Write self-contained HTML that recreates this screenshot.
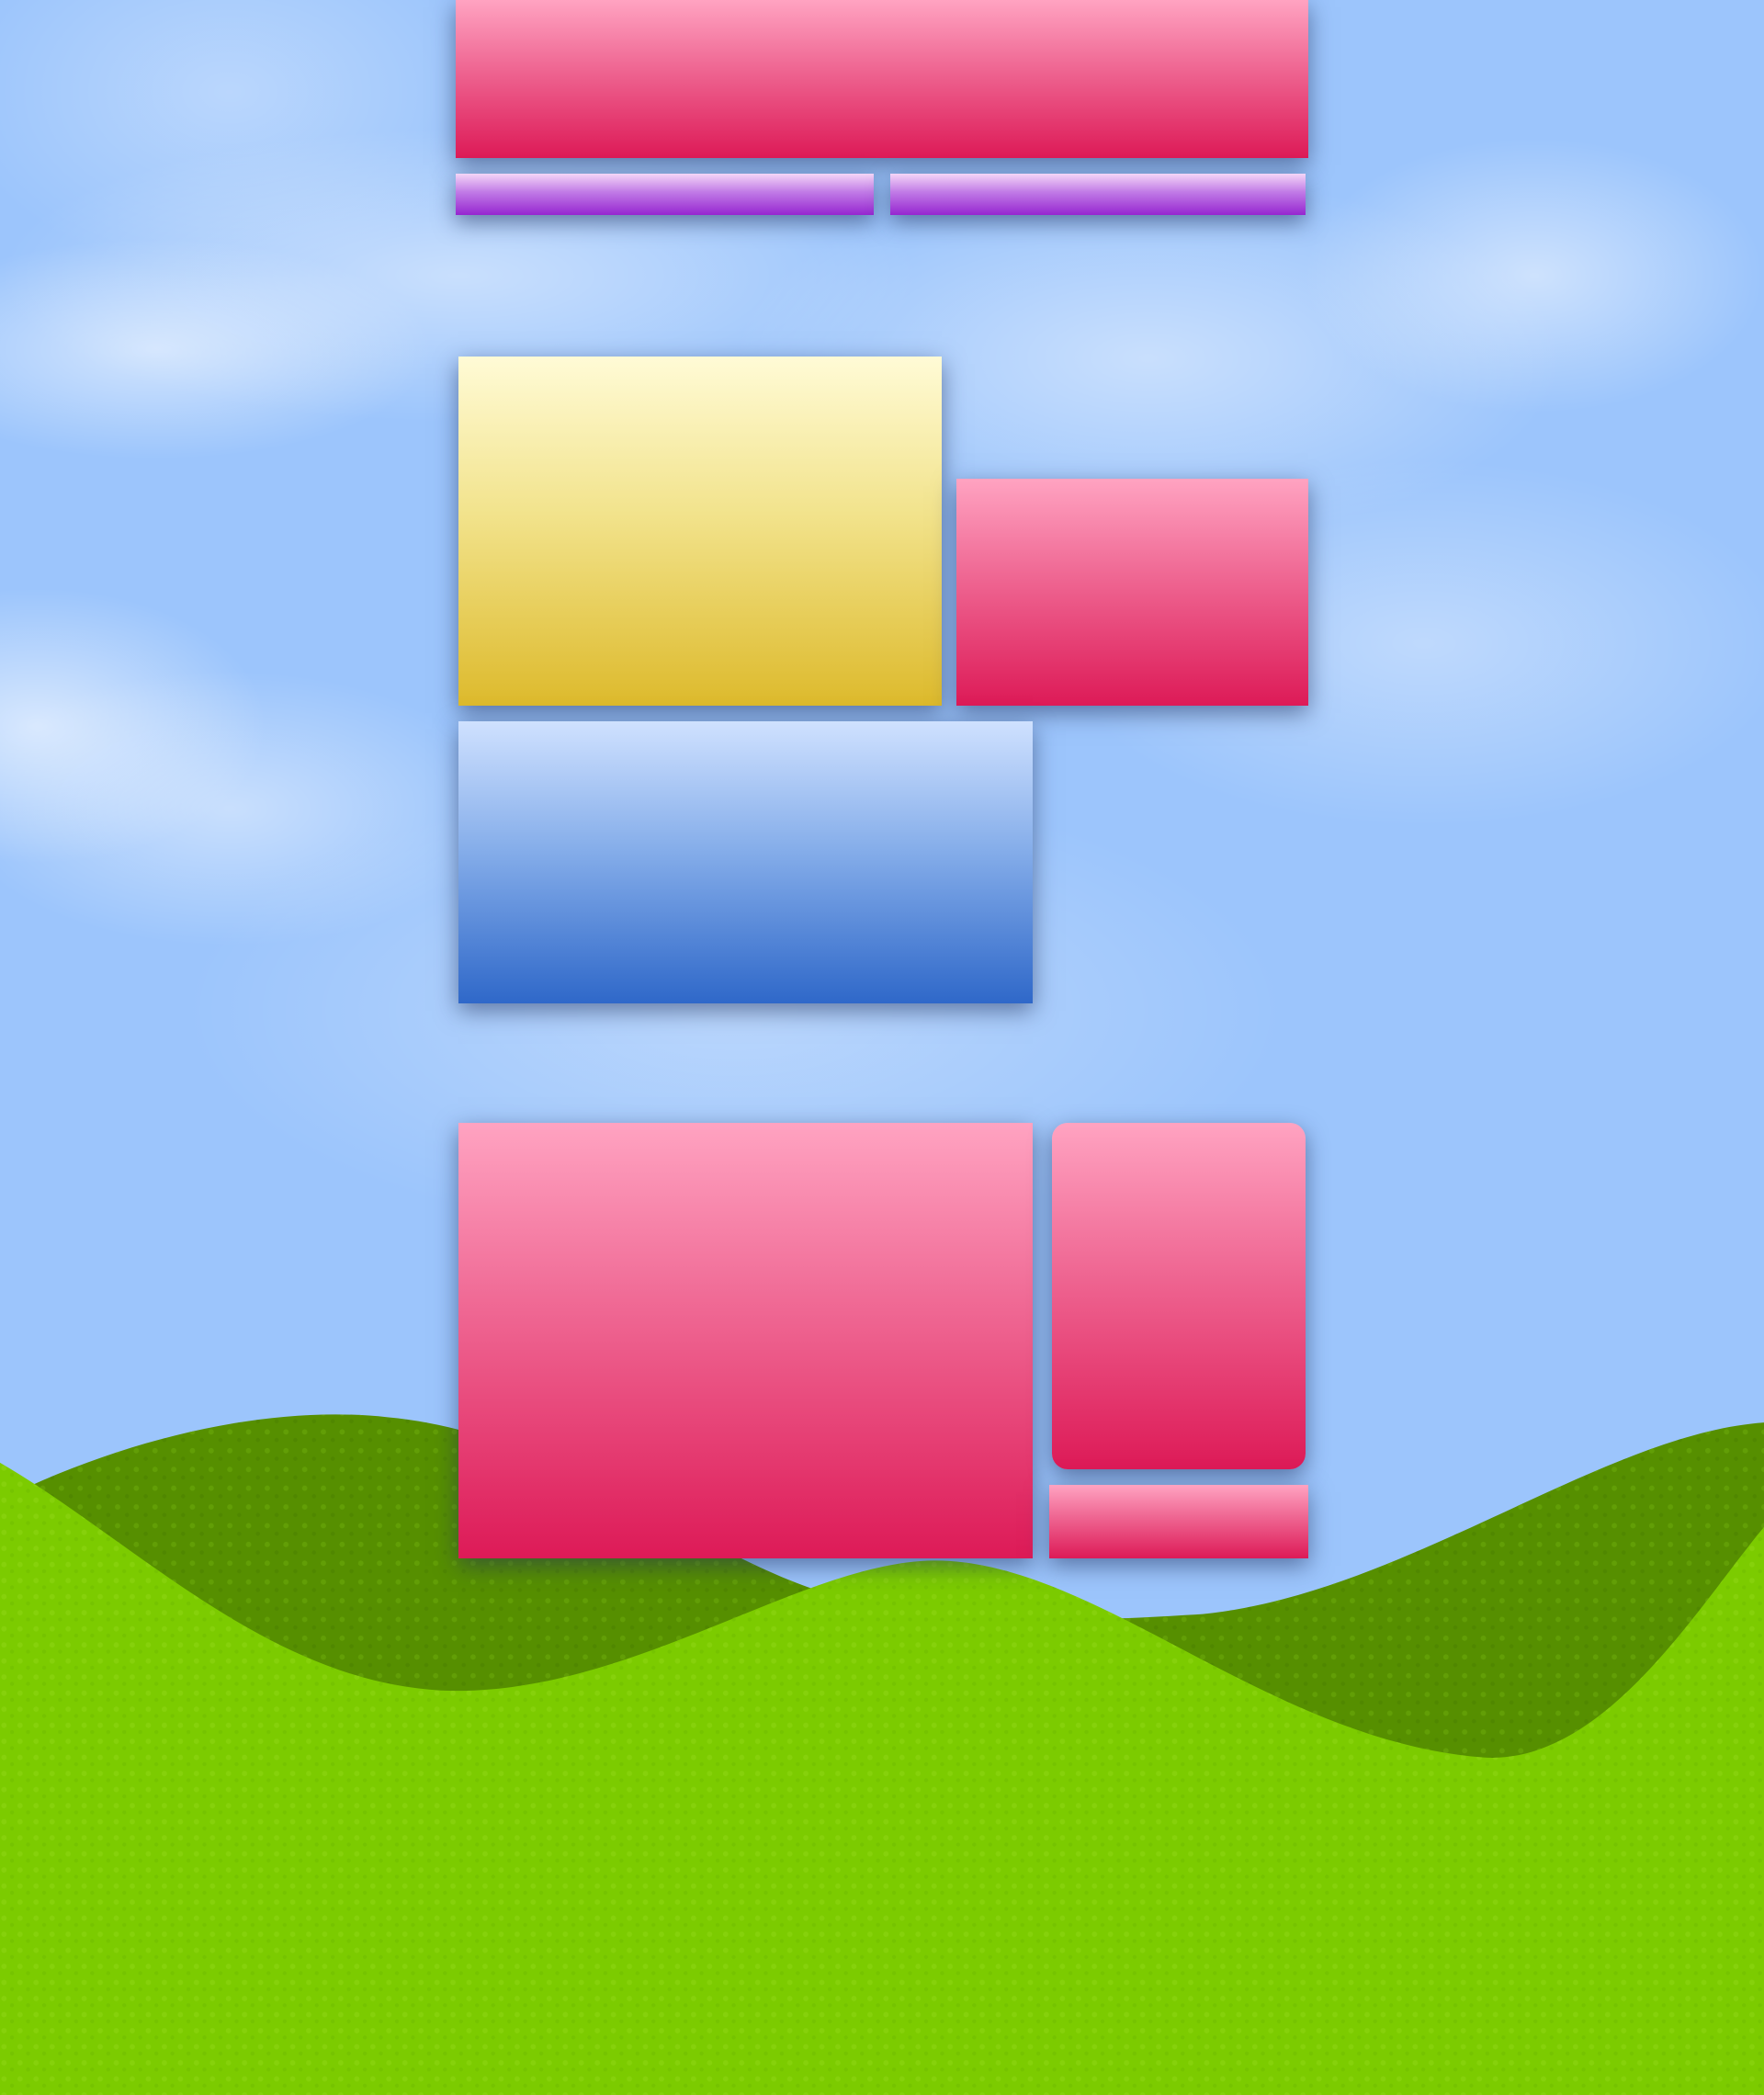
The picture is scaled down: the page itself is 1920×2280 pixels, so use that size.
<!DOCTYPE html>
<html><head><meta charset="utf-8"><style>
html,body{margin:0;padding:0}
body{width:1920px;height:2280px;position:relative;overflow:hidden;background:#9cc5fc;font-family:"Liberation Sans",sans-serif}
.sky{position:absolute;inset:0;background:
radial-gradient(ellipse 300px 120px at 170px 380px,rgba(255,255,255,.55),rgba(255,255,255,0)),
radial-gradient(ellipse 500px 160px at 500px 300px,rgba(255,255,255,.45),rgba(255,255,255,0)),
radial-gradient(ellipse 450px 200px at 1250px 390px,rgba(255,255,255,.45),rgba(255,255,255,0)),
radial-gradient(ellipse 250px 150px at 1670px 300px,rgba(255,255,255,.5),rgba(255,255,255,0)),
radial-gradient(ellipse 250px 150px at 40px 790px,rgba(255,255,255,.6),rgba(255,255,255,0)),
radial-gradient(ellipse 300px 150px at 250px 880px,rgba(255,255,255,.45),rgba(255,255,255,0)),
radial-gradient(ellipse 400px 200px at 1550px 700px,rgba(255,255,255,.35),rgba(255,255,255,0)),
radial-gradient(ellipse 600px 250px at 800px 1100px,rgba(255,255,255,.3),rgba(255,255,255,0)),
radial-gradient(ellipse 300px 200px at 250px 100px,rgba(255,255,255,.3),rgba(255,255,255,0));}
.b{position:absolute;box-shadow:0 8px 24px rgba(30,45,90,.55)}
.pink{background:linear-gradient(#ffa3c1,#f06b96 40%,#dd1a57)}
.pur{background:linear-gradient(#f4d6f7,#c07ae6 45%,#9626d0)}
.yel{background:linear-gradient(#fffbd6,#f2e38c 45%,#ddba2c)}
.blu{background:linear-gradient(#cfe1ff,#86aeea 45%,#2f68c9)}
svg{position:absolute;left:0;top:0}
</style></head><body>
<div class="sky"></div>
<svg width="1920" height="2280" viewBox="0 0 1320 1564" preserveAspectRatio="none">
<defs>
<pattern id="g1" width="14" height="14" patternUnits="userSpaceOnUse"><circle cx="4" cy="5" r="2" fill="#6aa80a" opacity=".6"/><circle cx="11" cy="11" r="1.6" fill="#4a8000" opacity=".5"/></pattern>
<pattern id="g2" width="12" height="12" patternUnits="userSpaceOnUse"><circle cx="3" cy="4" r="2" fill="#8ad410" opacity=".7"/><circle cx="9" cy="9" r="1.5" fill="#72c000" opacity=".7"/></pattern>
</defs>
<path d="M0,1120 C90,1075 200,1048 290,1058 C420,1070 520,1160 620,1190 C720,1215 820,1210 900,1205 C1050,1190 1200,1070 1320,1062 L1320,1564 L0,1564 Z" fill="#568f00"/>
<path d="M0,1120 C90,1075 200,1048 290,1058 C420,1070 520,1160 620,1190 C720,1215 820,1210 900,1205 C1050,1190 1200,1070 1320,1062 L1320,1564 L0,1564 Z" fill="url(#g1)"/>
<path d="M0,1092 C100,1150 200,1255 330,1262 C470,1268 600,1165 700,1165 C820,1165 950,1300 1110,1312 C1200,1318 1270,1200 1320,1140 L1320,1564 L0,1564 Z" fill="#7ccb00"/>
<path d="M0,1092 C100,1150 200,1255 330,1262 C470,1268 600,1165 700,1165 C820,1165 950,1300 1110,1312 C1200,1318 1270,1200 1320,1140 L1320,1564 L0,1564 Z" fill="url(#g2)"/>
</svg>
<div class="b pink" style="left:496px;top:0;width:928px;height:172px"></div>
<div class="b pur" style="left:496px;top:189px;width:455px;height:45px"></div>
<div class="b pur" style="left:969px;top:189px;width:452px;height:45px"></div>
<div class="b yel" style="left:499px;top:388px;width:526px;height:380px"></div>
<div class="b pink" style="left:1041px;top:521px;width:383px;height:247px"></div>
<div class="b blu" style="left:499px;top:785px;width:625px;height:307px"></div>
<div class="b pink" style="left:499px;top:1222px;width:625px;height:474px"></div>
<div class="b pink" style="left:1145px;top:1222px;width:276px;height:377px;border-radius:17px"></div>
<div class="b pink" style="left:1142px;top:1616px;width:282px;height:80px"></div>
</body></html>
